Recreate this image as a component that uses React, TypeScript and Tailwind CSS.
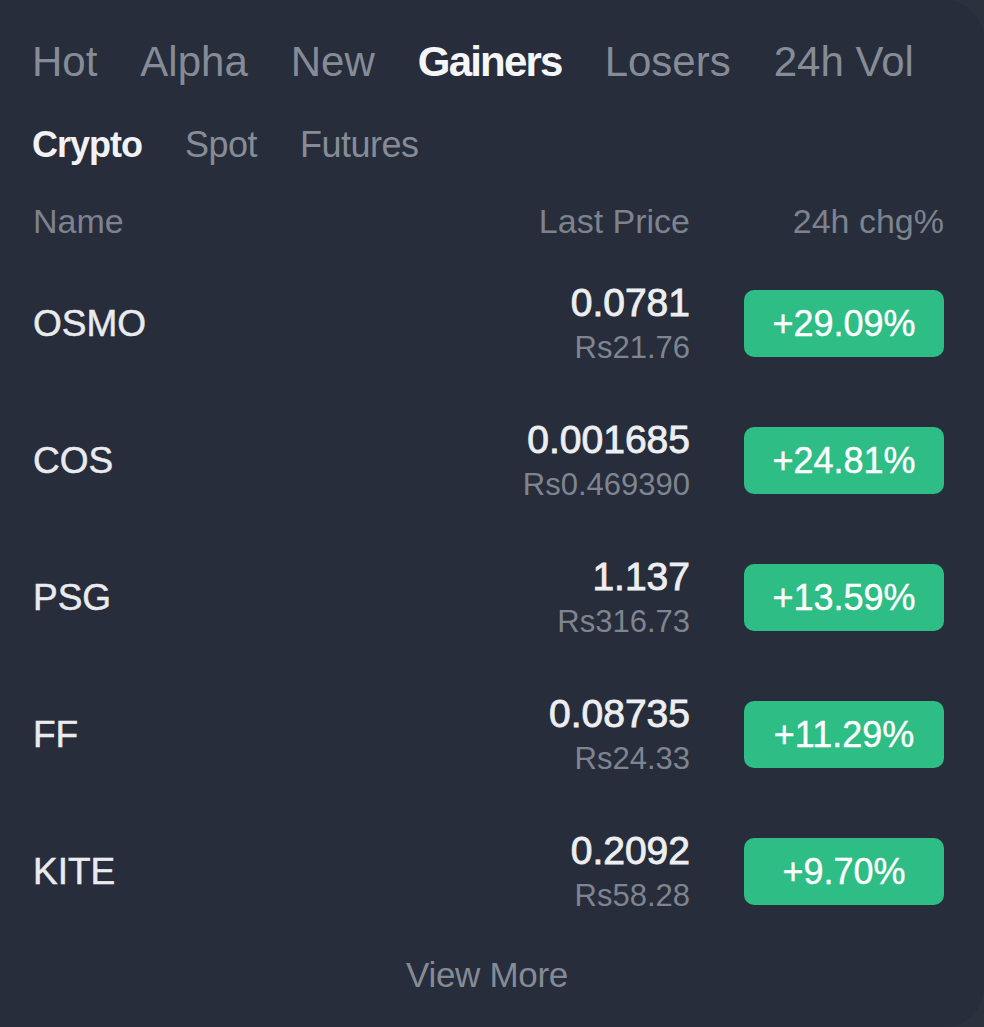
import React, { useState } from 'react';

const rows = [
  { name: 'OSMO', price: '0.0781', local: 'Rs21.76', chg: '+29.09%' },
  { name: 'COS', price: '0.001685', local: 'Rs0.469390', chg: '+24.81%' },
  { name: 'PSG', price: '1.137', local: 'Rs316.73', chg: '+13.59%' },
  { name: 'FF', price: '0.08735', local: 'Rs24.33', chg: '+11.29%' },
  { name: 'KITE', price: '0.2092', local: 'Rs58.28', chg: '+9.70%' },
];

const tabs = ['Hot', 'Alpha', 'New', 'Gainers', 'Losers', '24h Vol'];
const subTabs = ['Crypto', 'Spot', 'Futures'];

export default function App() {
  const [tab, setTab] = useState('Gainers');
  const [sub, setSub] = useState('Crypto');

  return (
    <div className="w-full h-[1027px] bg-[#2b313d] font-['Liberation_Sans',Arial,sans-serif]">
      <div className="h-full bg-[#272d3a] rounded-r-[40px] pl-[32px] pr-[40px] pt-[41px]">
        {/* Main tabs */}
        <div className="flex gap-[43px] text-[42px] leading-[42px] h-[42px]">
          {tabs.map(t => (
            <button
              key={t}
              onClick={() => setTab(t)}
              className={t === tab ? 'font-bold text-[#f5f6f8] tracking-[-1.8px]' : 'text-[#868c97]'}
            >
              {t}
            </button>
          ))}
        </div>

        {/* Sub tabs */}
        <div className="flex gap-[43px] mt-[44px] text-[36px] leading-[36px] h-[36px]">
          {subTabs.map(t => (
            <button
              key={t}
              onClick={() => setSub(t)}
              className={t === sub ? 'font-bold text-[#f0f2f5] tracking-[-1px]' : 'text-[#868c97] tracking-[-0.5px]'}
            >
              {t}
            </button>
          ))}
        </div>

        {/* Column headers */}
        <div className="flex items-center mt-[41px] text-[34px] leading-[34px] text-[#7d838e]">
          <span className="flex-1 pl-[1px]">Name</span>
          <span className="w-[300px] text-right">Last Price</span>
          <span className="w-[254px] text-right">24h chg%</span>
        </div>

        {/* Rows */}
        <div className="mt-[17px]">
          {rows.map(r => (
            <div key={r.name} className="flex items-center h-[137px]">
              <span className="flex-1 pl-[1px] text-[37px] leading-[37px] text-[#e9ebef] [-webkit-text-stroke:0.5px_#e9ebef]">{r.name}</span>
              <div className="w-[300px] flex flex-col items-end">
                <span className="text-[39px] leading-[38px] text-[#eceef1] [-webkit-text-stroke:0.9px_#eceef1]">{r.price}</span>
                <span className="mt-[10px] text-[31px] leading-[31px] text-[#7f8590]">{r.local}</span>
              </div>
              <div className="ml-[54px] w-[200px] h-[67px] rounded-[10px] bg-[#2ebd85] flex items-center justify-center text-[36px] text-white [-webkit-text-stroke:0.4px_#ffffff]">
                {r.chg}
              </div>
            </div>
          ))}
        </div>

        <div className="mt-[17px] text-center text-[35px] leading-[35px] text-[#858b96] pr-[2px] tracking-[-0.3px]">
          View More
        </div>
      </div>
    </div>
  );
}
